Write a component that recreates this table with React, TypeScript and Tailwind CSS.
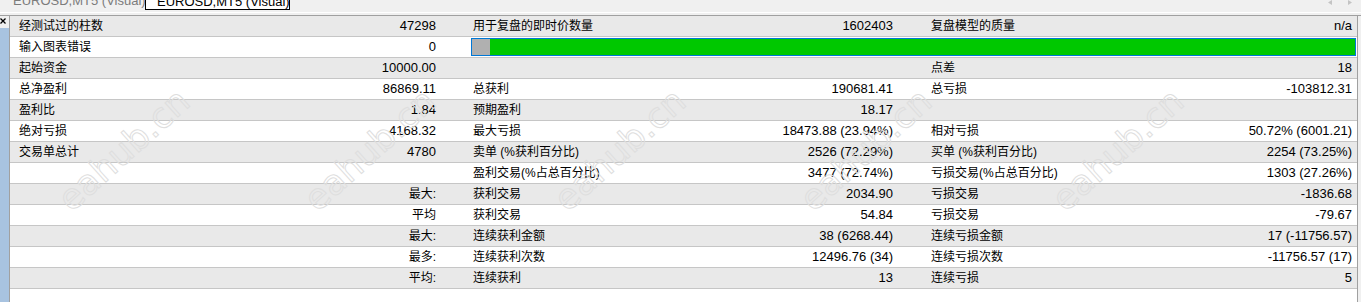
import React from "react";

type Cell = { label?: string; value?: string; right?: boolean };
type Row = { c1: Cell; c2?: Cell; c3?: Cell; bar?: boolean };

const rows: Row[] = [
  { c1: { label: "经测试过的柱数", value: "47298" }, c2: { label: "用于复盘的即时价数量", value: "1602403" }, c3: { label: "复盘模型的质量", value: "n/a" } },
  { c1: { label: "输入图表错误", value: "0" }, bar: true },
  { c1: { label: "起始资金", value: "10000.00" }, c2: {}, c3: { label: "点差", value: "18" } },
  { c1: { label: "总净盈利", value: "86869.11" }, c2: { label: "总获利", value: "190681.41" }, c3: { label: "总亏损", value: "-103812.31" } },
  { c1: { label: "盈利比", value: "1.84" }, c2: { label: "预期盈利", value: "18.17" }, c3: {} },
  { c1: { label: "绝对亏损", value: "4168.32" }, c2: { label: "最大亏损", value: "18473.88 (23.94%)" }, c3: { label: "相对亏损", value: "50.72% (6001.21)" } },
  { c1: { label: "交易单总计", value: "4780" }, c2: { label: "卖单 (%获利百分比)", value: "2526 (72.29%)" }, c3: { label: "买单 (%获利百分比)", value: "2254 (73.25%)" } },
  { c1: {}, c2: { label: "盈利交易(%占总百分比)", value: "3477 (72.74%)" }, c3: { label: "亏损交易(%占总百分比)", value: "1303 (27.26%)" } },
  { c1: { label: "最大:", right: true }, c2: { label: "获利交易", value: "2034.90" }, c3: { label: "亏损交易", value: "-1836.68" } },
  { c1: { label: "平均", right: true }, c2: { label: "获利交易", value: "54.84" }, c3: { label: "亏损交易", value: "-79.67" } },
  { c1: { label: "最大:", right: true }, c2: { label: "连续获利金额", value: "38 (6268.44)" }, c3: { label: "连续亏损金额", value: "17 (-11756.57)" } },
  { c1: { label: "最多:", right: true }, c2: { label: "连续获利次数", value: "12496.76 (34)" }, c3: { label: "连续亏损次数", value: "-11756.57 (17)" } },
  { c1: { label: "平均:", right: true }, c2: { label: "连续获利", value: "13" }, c3: { label: "连续亏损", value: "5" } },
];

const watermarks = [124, 370, 620, 866, 1118];

const CellView = ({ cell, className }: { cell: Cell; className: string }) => (
  <div className={`flex items-center ${cell.right ? "justify-end" : "justify-between"} ${className}`}>
    {cell.label && <span className="text-[12px] whitespace-nowrap">{cell.label}</span>}
    {cell.value && <span className="text-[13px] whitespace-nowrap">{cell.value}</span>}
  </div>
);

// tab strip is scrolled so only the bottom of the tabs shows
const TabBar = () => (
  <div className="h-[12px] overflow-hidden relative bg-[#f0f0f0]">
    <div className="flex items-start -mt-[8px]">
      <div className="pl-[13px] w-[145px] pt-[1px] text-[13px] text-[#7c7c7c] leading-[15px] whitespace-nowrap">EUROSD,MT5 (Visual)</div>
      <div className="w-[145px] h-[18px] border border-black bg-white pl-[11px] pt-[1px]">
        <span className="block text-[13px] text-black leading-[15px] whitespace-nowrap">EUROSD,MT5 (Visual)</span>
      </div>
    </div>
    {/* scroll arrows */}
    <svg className="absolute top-0 left-[1326px]" width="30" height="6" viewBox="0 0 30 6">
      <path d="M6 0 L2 2.5 L6 5 Z" fill="#c4c4c4" />
      <path d="M22 0 L26 2.5 L22 5 Z" fill="#c4c4c4" />
    </svg>
  </div>
);

export default function App() {
  return (
    <div className="w-[1361px] h-[302px] bg-[#f0f0f0] relative overflow-hidden font-['Liberation_Sans','Noto_Sans_CJK_SC',sans-serif] text-black">
      <TabBar />
      <div className="h-[1px] bg-white" />
      <div className="h-[2px]" />
      <div className="flex border-t border-[#a0a0a0] h-[287px]">
        {/* left dock strip */}
        <div className="w-[9px] flex flex-col">
          <div className="h-[12px] relative">
            <svg className="absolute left-0 top-[2px]" width="6" height="6" viewBox="0 0 6 6">
              <path d="M0.5 0.5 L5.5 5.5 M5.5 0.5 L0.5 5.5" stroke="#000" strokeWidth="1.3" />
            </svg>
          </div>
          <div className="flex-1 bg-[#a8c3e0]" />
        </div>
        {/* results table */}
        <div className="w-[1349px] border-l border-r border-[#a0a0a0] bg-white">
          {rows.map((r, i) => (
            <div key={i} className={`flex h-[21px] border-b border-[#c6c6c6] ${i % 2 === 0 ? "bg-[#e9e9e9]" : "bg-white"}`}>
              <CellView cell={r.c1} className="w-[448px] pl-[9px] pr-[22px]" />
              {r.bar ? (
                <div className="flex-1 flex items-center pl-[13px] pr-[1px]">
                  <div className="flex w-full h-[18px] border border-[#0078d7] bg-[#00c800]">
                    <div className="w-[18px] bg-[#b0b0b0]" />
                  </div>
                </div>
              ) : (
                <>
                  <CellView cell={r.c2 ?? {}} className="w-[457px] pl-[15px] pr-[22px]" />
                  <CellView cell={r.c3 ?? {}} className="flex-1 pl-[16px] pr-[5px]" />
                </>
              )}
            </div>
          ))}
        </div>
      </div>
      {/* eahub.cn watermarks */}
      {watermarks.map((x) => (
        <div
          key={x}
          aria-hidden="true"
          className="absolute top-[150px] pointer-events-none select-none -translate-x-1/2 -translate-y-1/2 -rotate-[42deg] text-[35px] text-transparent [-webkit-text-stroke:1px_#dedede] whitespace-nowrap font-['DejaVu_Sans',sans-serif]"
          style={{ left: x }}
        >
          eahub.cn
        </div>
      ))}
    </div>
  );
}
